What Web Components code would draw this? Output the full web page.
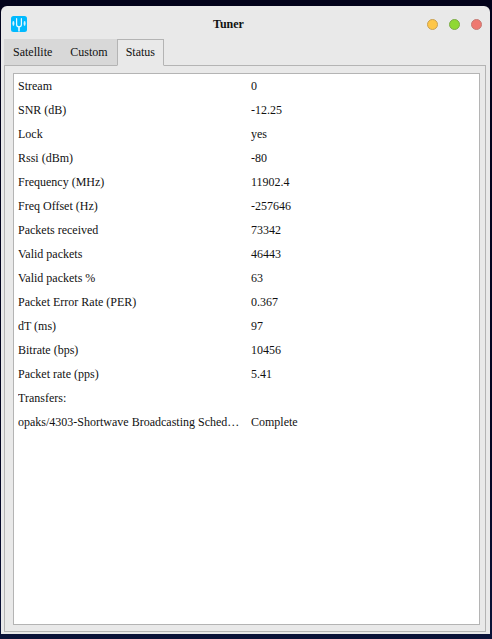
<!DOCTYPE html>
<html>
<head>
<meta charset="utf-8">
<title>Tuner</title>
<style>
    html, body { margin: 0; height: 100%; overflow: hidden; }
    html { background: linear-gradient(#02021a, #030522 70%, #0a1238); }
    body { font-family: "Liberation Serif", serif; font-size: 12px; color: #111; }
</style>
</head>
<body>
<tuner-window title="Tuner">
    <tuner-tabs>
        <tuner-tab>Satellite</tuner-tab>
        <tuner-tab>Custom</tuner-tab>
        <tuner-tab active>Status</tuner-tab>
    </tuner-tabs>
    <status-table>
        <status-row name="Stream" value="0"></status-row>
        <status-row name="SNR (dB)" value="-12.25"></status-row>
        <status-row name="Lock" value="yes"></status-row>
        <status-row name="Rssi (dBm)" value="-80"></status-row>
        <status-row name="Frequency (MHz)" value="11902.4"></status-row>
        <status-row name="Freq Offset (Hz)" value="-257646"></status-row>
        <status-row name="Packets received" value="73342"></status-row>
        <status-row name="Valid packets" value="46443"></status-row>
        <status-row name="Valid packets %" value="63"></status-row>
        <status-row name="Packet Error Rate (PER)" value="0.367"></status-row>
        <status-row name="dT (ms)" value="97"></status-row>
        <status-row name="Bitrate (bps)" value="10456"></status-row>
        <status-row name="Packet rate (pps)" value="5.41"></status-row>
        <status-row name="Transfers:" value=""></status-row>
        <status-row name="opaks/4303-Shortwave Broadcasting Sched…" value="Complete"></status-row>
    </status-table>
</tuner-window>

<script>
// Window frame with title bar, app icon and the three traffic light buttons
class TunerWindow extends HTMLElement {
    constructor() {
        super();
        this.attachShadow({ mode: 'open' });
        this.shadowRoot.innerHTML = `
            <style>
                :host { display: flex; flex-direction: column; box-sizing: border-box; height: 628px; margin: 6px 2px 0 1px; background: #e9e9e9; border-radius: 6px 6px 0 0; padding: 0 4px 2px 3px; }
                .bar { display: flex; align-items: center; box-sizing: border-box; height: 33px; flex: none; padding: 4px 0 0 7px; }
                .icon { width: 16px; height: 16px; flex: none; margin-top: -1px; }
                .title { flex: 1; text-align: center; font-weight: bold; font-size: 12px; color: #111; padding-left: 3px; }
                .buttons { display: flex; gap: 11px; padding-right: 4px; }
                .dot { box-sizing: border-box; width: 11px; height: 11px; border-radius: 50%; border: 1px solid; }
                .min { background: #fec648; border-color: #c9a052; }
                .max { background: #8fd834; border-color: #7cab48; }
                .close { background: #ee7870; border-color: #c47b75; }
                .body { flex: 1; display: flex; flex-direction: column; min-height: 0; }
            </style>
            <div class="bar">
                <svg class="icon" viewBox="0 0 16 16">
                    <rect width="16" height="16" rx="2.5" fill="#00baff"/>
                    <path d="M5.6 2.5v6a2.4 2.4 0 0 0 4.8 0v-6" fill="none" stroke="#e6f8ff" stroke-width="1.2" stroke-linecap="round"/>
                    <path d="M8 10.5v5" fill="none" stroke="#e6f8ff" stroke-width="1.6"/>
                    <ellipse cx="2.4" cy="7.5" rx="1" ry="2.4" fill="#d5f3ff"/>
                    <ellipse cx="13.6" cy="7.5" rx="1" ry="2.4" fill="#d5f3ff"/>
                </svg>
                <div class="title"></div>
                <div class="buttons">
                    <div class="dot min"></div>
                    <div class="dot max"></div>
                    <div class="dot close"></div>
                </div>
            </div>
            <div class="body"><slot></slot></div>
        `;
    }
    connectedCallback() {
        this.shadowRoot.querySelector('.title').textContent = this.getAttribute('title');
    }
}

class TunerTabs extends HTMLElement {
    constructor() {
        super();
        this.attachShadow({ mode: 'open' });
        this.shadowRoot.innerHTML = `
            <style>
                :host { display: flex; flex: none; position: relative; z-index: 1; margin-bottom: -1px; }
            </style>
            <slot></slot>
        `;
    }
}

class TunerTab extends HTMLElement {
    constructor() {
        super();
        this.attachShadow({ mode: 'open' });
        this.shadowRoot.innerHTML = `
            <style>
                :host { display: block; box-sizing: border-box; height: 27px; line-height: 25px; padding: 0 9px; background: #d8d8d8; color: #111; border-top: 1px solid #d8d8d8; border-bottom: 1px solid #b4b4b4; }
                :host([active]) { background: #e9e9e9; border: 1px solid #b4b4b4; border-bottom-color: #e9e9e9; padding: 0 8px; }
            </style>
            <slot></slot>
        `;
    }
}

// Pane border plus the white list inside it
class StatusTable extends HTMLElement {
    constructor() {
        super();
        this.attachShadow({ mode: 'open' });
        this.shadowRoot.innerHTML = `
            <style>
                :host { display: flex; flex: 1; min-height: 0; box-sizing: border-box; border: 1px solid #b4b4b4; padding: 7px 5px 6px 8px; }
                .list { flex: 1; background: #fff; border: 1px solid #b4b4b4; padding-left: 4px; }
            </style>
            <div class="list"><slot></slot></div>
        `;
    }
}

class StatusRow extends HTMLElement {
    constructor() {
        super();
        this.attachShadow({ mode: 'open' });
        this.shadowRoot.innerHTML = `
            <style>
                :host { display: grid; grid-template-columns: 223px auto; column-gap: 10px; height: 24px; line-height: 24px; color: #111; }
                .name { overflow: hidden; white-space: nowrap; }
            </style>
            <div class="name"></div>
            <div class="value"></div>
        `;
    }
    connectedCallback() {
        this.shadowRoot.querySelector('.name').textContent = this.getAttribute('name');
        this.shadowRoot.querySelector('.value').textContent = this.getAttribute('value');
    }
}

customElements.define('tuner-window', TunerWindow);
customElements.define('tuner-tabs', TunerTabs);
customElements.define('tuner-tab', TunerTab);
customElements.define('status-table', StatusTable);
customElements.define('status-row', StatusRow);
</script>
</body>
</html>
